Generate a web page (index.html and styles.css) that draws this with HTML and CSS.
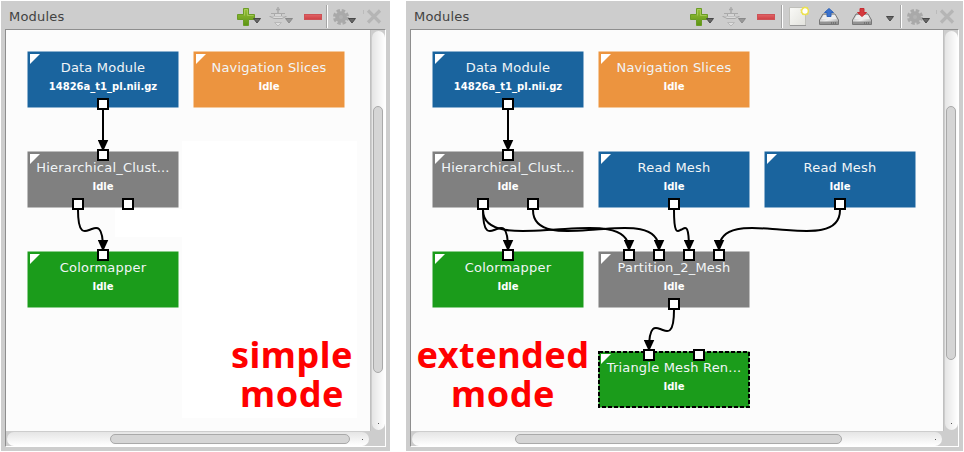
FILE: index.html
```
<!DOCTYPE html>
<html lang="en">
<head>
<meta charset="utf-8">
<title>Modules</title>
<link rel="stylesheet" href="styles.css">
</head>
<body>
<svg class="defs" width="0" height="0">
  <defs>
    <linearGradient id="green" x1="0" y1="0" x2="0" y2="1"><stop offset="0" stop-color="#9bc23c"/><stop offset="1" stop-color="#5c9413"/></linearGradient>
    <linearGradient id="red" x1="0" y1="0" x2="0" y2="1"><stop offset="0" stop-color="#e06467"/><stop offset="1" stop-color="#cf3f44"/></linearGradient>
    <linearGradient id="paper" x1="0" y1="0" x2="1" y2="1"><stop offset="0" stop-color="#fafaf7"/><stop offset="1" stop-color="#e2e2dd"/></linearGradient>
    <linearGradient id="metal" x1="0" y1="0" x2="1" y2="1"><stop offset="0" stop-color="#aaa"/><stop offset=".5" stop-color="#eee"/><stop offset="1" stop-color="#999"/></linearGradient>
    <marker id="arrow" markerUnits="userSpaceOnUse" markerWidth="12" markerHeight="12" refX="5.5" refY="9.5" orient="0"><path d="M0 0H11L5.500 12Z"/></marker>
    <symbol id="caret" viewBox="0 0 8 6"><path d="M.5.5H7.5L4 5Z" fill="#666" stroke="#484848"/></symbol>
    <symbol id="plus" viewBox="0 0 18 18"><path d="M6.5.5H11.5V6.5H17.5V11.5H11.5V17.5H6.5V11.5H.5V6.5H6.5Z" fill="url(#green)" stroke="#6a9c26"/><path d="M7.5 7.5V1.5H10.5V7.5H16.5" fill="none" stroke="#b0d264" opacity=".7"/></symbol>
    <symbol id="network" viewBox="0 0 20 20"><g fill="none" stroke="#a9a9a9"><path d="M10 1V7M8 3.500H12" stroke-width="1.500"/><path d="M1.500 10.500H6M14 10.500H18.500M3 7.500H17"/><path d="M6.500 7.500H13.500V10.500H6.500Z" fill="#d6d6d6"/><path d="M2 10.500L6 12.500H14L18 10.500" fill="#dadada"/><path d="M6.500 16.500H13.500L10 20Z" fill="#ddd" stroke="#b8b8b8"/></g></symbol>
    <symbol id="minus" viewBox="0 0 18 6"><rect x=".5" y=".5" width="17" height="5" fill="url(#red)" stroke="#cd5256"/></symbol>
    <symbol id="gear" viewBox="0 0 16 16"><circle cx="8" cy="8" r="5.800" fill="#a9a9a9"/><circle cx="8" cy="8" r="6.500" fill="none" stroke="#a9a9a9" stroke-width="3" stroke-dasharray="3.300 1.800"/><circle cx="8" cy="8" r="2" fill="#b3b3b3"/></symbol>
    <symbol id="close" viewBox="0 0 19 15"><path d="M.5 1V5" stroke="#bbb"/><path d="M5 1.500L17 13.500M17 1.500L5 13.500" stroke="#b5b5b5" stroke-width="3.200"/></symbol>
    <symbol id="new" viewBox="0 0 20 20"><path d="M.5 1.500H16.500V19.500H.5Z" fill="url(#paper)" stroke="#c0c0bb"/><path d="M1 19.500H17" stroke="#999"/><circle cx="16" cy="5" r="3.300" fill="#fff" stroke="#eee24b" stroke-width="1.300"/><circle cx="16" cy="5" r="4" fill="none" stroke="#eee24b" stroke-width="1.200" stroke-dasharray="1.500 1"/></symbol>
    <symbol id="drive" viewBox="0 0 20 17"><path d="M4 6H16L19.500 12V16.500H.5V12Z" fill="url(#metal)" stroke="#777"/><path d="M4.500 7H15.500L17.500 11H2.500Z" fill="#ececec"/><path d="M1 13.500H19V16H1Z" fill="#929292"/><path d="M12 15H18" stroke="#555" stroke-dasharray="1 1"/></symbol>
    <symbol id="up" viewBox="0 0 10 9"><path d="M3 8.500H7V4.500H9.500L5 .5.5 4.500H3Z" fill="#3a72ce" stroke="#2f63b8"/></symbol>
    <symbol id="down" viewBox="0 0 10 9"><path d="M3 .5H7V4.500H9.500L5 8.500.5 4.500H3Z" fill="#d53a3e" stroke="#c62c32"/></symbol>
  </defs>
</svg>
<main class="app">
  <section class="panel simple">
    <header class="bar">
      <h2>Modules</h2>
      <svg class="tools" width="152" height="28"><use href="#plus" x="3" y="7" width="18" height="18"/><use href="#caret" x="19" y="17" width="8" height="6"/><use href="#network" x="34" y="5" width="20" height="20"/><use class="dim" href="#caret" x="51" y="17" width="8" height="6"/><use href="#minus" x="70" y="13" width="18" height="6"/><path class="sep-dark" d="M92.500 4V27"/><path class="sep" d="M93.500 4V27"/><use href="#gear" x="99" y="8" width="16" height="16"/><use href="#caret" x="114" y="17" width="8" height="6"/><use href="#close" x="129" y="8" width="19" height="15"/></svg>
    </header>
    <div class="frame">
      <div class="canvas">
        <div class="patch large"></div><div class="patch small"></div>
        <div class="node blue c1 r1"><b>Data Module</b><small>14826a_t1_pl.nii.gz</small></div>
        <div class="node orange c2 r1"><b>Navigation Slices</b><small>Idle</small></div>
        <div class="node gray c1 r2"><b>Hierarchical_Clust...</b><small>Idle</small></div>
        <div class="node green c1 r3"><b>Colormapper</b><small>Idle</small></div>
        <svg class="wires" viewBox="0 0 364 401">
          <g class="edges"><path d="M97 80V119"/><path d="M72 180C72 207 80 201 84.500 199.500C89 198 97 192 97 219"/></g>
          <g class="ports"><rect x="92" y="69" width="10" height="10"/><rect x="92" y="120" width="10" height="10"/><rect x="67" y="169" width="10" height="10"/><rect x="117" y="169" width="10" height="10"/><rect x="92" y="220" width="10" height="10"/></g>
        </svg>
        <p class="caption">simple<br>mode</p>
      </div>
      <div class="scroll vertical"><div class="track"><i class="thumb"></i></div></div>
      <div class="scroll horizontal"><div class="track"><i class="thumb"></i></div></div>
    </div>
  </section>
  <section class="panel extended">
    <header class="bar">
      <h2>Modules</h2>
      <svg class="tools" width="272" height="28"><use href="#plus" x="3" y="7" width="18" height="18"/><use href="#caret" x="19" y="17" width="8" height="6"/><use href="#network" x="34" y="5" width="20" height="20"/><use class="dim" href="#caret" x="51" y="17" width="8" height="6"/><use href="#minus" x="70" y="13" width="18" height="6"/><path class="sep-dark" d="M94.500 4V27"/><path class="sep" d="M95.500 4V27"/><use href="#new" x="102" y="5" width="20" height="20"/><use href="#drive" x="132" y="7" width="20" height="17"/><use href="#up" x="137" y="7" width="10" height="9"/><use href="#drive" x="165" y="7" width="20" height="17"/><use href="#down" x="170" y="7" width="10" height="9"/><use href="#caret" x="199" y="15" width="8" height="6"/><path class="sep-dark" d="M213.500 4V27"/><path class="sep" d="M214.500 4V27"/><use href="#gear" x="220" y="8" width="16" height="16"/><use href="#caret" x="235" y="17" width="8" height="6"/><use href="#close" x="249" y="8" width="19" height="15"/></svg>
    </header>
    <div class="frame">
      <div class="canvas">
        <div class="node blue c1 r1"><b>Data Module</b><small>14826a_t1_pl.nii.gz</small></div>
        <div class="node orange c2 r1"><b>Navigation Slices</b><small>Idle</small></div>
        <div class="node gray c1 r2"><b>Hierarchical_Clust...</b><small>Idle</small></div>
        <div class="node blue c2 r2"><b>Read Mesh</b><small>Idle</small></div>
        <div class="node blue c3 r2"><b>Read Mesh</b><small>Idle</small></div>
        <div class="node green c1 r3"><b>Colormapper</b><small>Idle</small></div>
        <div class="node gray c2 r3"><b>Partition_2_Mesh</b><small>Idle</small></div>
        <div class="node green c2 r4"><b>Triangle Mesh Ren...</b><small>Idle</small></div>
        <svg class="wires" viewBox="0 0 532 401">
          <rect class="selection" x="188" y="322" width="150" height="55"/>
          <g class="edges"><path d="M97 80V119"/><path d="M72 180C72 207 80 201 84.500 199.500C89 198 97 192 97 219"/><path d="M72 180C72 207 117 201 145 199.500C173 198 218 192 218 219"/><path d="M122 180C122 207 161 201 185 199.500C209 198 248 192 248 219"/><path d="M263 180C263 207 267 201 270.500 199.500C274 198 278 192 278 219"/><path d="M429 180C429 207 391 201 368.500 199.500C346 198 308 192 308 219"/><path d="M263 280C263 307 255 301 250.500 299.500C246 298 238 292 238 319"/></g>
          <g class="ports"><rect x="92" y="69" width="10" height="10"/><rect x="92" y="120" width="10" height="10"/><rect x="67" y="169" width="10" height="10"/><rect x="117" y="169" width="10" height="10"/><rect x="258" y="169" width="10" height="10"/><rect x="424" y="169" width="10" height="10"/><rect x="92" y="220" width="10" height="10"/><rect x="213" y="220" width="10" height="10"/><rect x="243" y="220" width="10" height="10"/><rect x="273" y="220" width="10" height="10"/><rect x="303" y="220" width="10" height="10"/><rect x="258" y="269" width="10" height="10"/><rect x="233" y="320" width="10" height="10"/><rect x="283" y="320" width="10" height="10"/></g>
        </svg>
        <p class="caption">extended<br>mode</p>
      </div>
      <div class="scroll vertical"><div class="track"><i class="thumb"></i></div></div>
      <div class="scroll horizontal"><div class="track"><i class="thumb"></i></div></div>
    </div>
  </section>
</main>
</body>
</html>
```
FILE: styles.css
```
* { box-sizing: border-box; }
body { margin: 0; background: #fff; font-family: "DejaVu Sans", sans-serif; overflow: hidden; }
.defs { position: absolute; }
.app { display: flex; gap: 16px; padding: 1px; width: 964px; height: 452px; }
.panel { display: flex; flex-direction: column; height: 450px; padding: 0 4px; background: #cdcdcd; }
.simple { width: 389px; }
.extended { width: 557px; }
.bar { display: flex; justify-content: space-between; height: 28px; flex: none; }
.bar h2 { margin: 0 0 0 4px; font-size: 13px; letter-spacing: .2px; font-weight: 400; line-height: 32px; color: #424242; }
.tools { display: block; flex: none; }
.dim { opacity: .5; }
.sep { stroke: #fff; }
.sep-dark { stroke: #a5a5a5; }
.frame { display: grid; grid-template-columns: 1fr 15px; grid-template-rows: 401px 15px; height: 418px; border: 1px solid #8e8e8e; border-right-color: #fff; border-bottom-color: #fff; }
.canvas { position: relative; background: #fcfcfc; overflow: hidden; }
.wires { position: absolute; inset: 0; width: 100%; height: 100%; }
.node { position: absolute; width: 152px; height: 57px; padding-top: 8px; border: 1px solid; border-radius: 1px; text-align: center; color: #f1f5f7; background-clip: padding-box; }
.node::before { content: ""; position: absolute; left: 1.5px; top: 1.5px; width: 11px; height: 11px; background: #fff; clip-path: polygon(0 0, 100% 0, 0 100%); }
.node b { display: block; font-size: 13px; letter-spacing: .2px; font-weight: 400; line-height: 15px; white-space: nowrap; }
.node small { display: block; margin-top: 5px; color: #fff; font-size: 10px; line-height: 14px; font-weight: 700; }
.c1 { left: 21px; }
.c2 { left: 187px; }
.c3 { left: 353px; }
.r1 { top: 21px; }
.r2 { top: 121px; }
.r3 { top: 221px; }
.r4 { top: 321px; }
.blue { background-color: #1a649e; border-color: #8cb1cf; }
.orange { background-color: #ec943f; border-color: #f5c99c; }
.gray { background-color: #808080; border-color: #bdbdbd; }
.green { background-color: #1b9c1b; border-color: #8ccd8c; }
.edges path { fill: none; stroke: #000; stroke-width: 2; marker-end: url(#arrow); }
.ports rect { fill: #fff; stroke: #000; stroke-width: 2; }
.selection { fill: none; stroke: #000; stroke-width: 2; stroke-dasharray: 4 2; }
.caption { position: absolute; margin: 0; color: #f00; font: bold 36px/39px "Noto Sans", sans-serif; letter-spacing: .5px; text-align: center; top: 305px; }
.simple .caption { left: 216px; width: 140px; }
.extended .caption { left: 1px; width: 190px; padding-right: 8px; }
.patch { position: absolute; background: #fff; }
.large { left: 176px; top: 111px; width: 175px; height: 277px; }
.small { left: 109px; top: 179px; width: 68px; height: 28px; }
.scroll { display: flex; background: #cdcdcd; }
.vertical { padding: 1px 0 1px 1px; border-left: 1px solid #c0c0c0; }
.horizontal { padding: 1px 1px 0; }
.track { display: flex; position: relative; flex: 1; border-radius: 7px; background: linear-gradient(90deg, #e5e5e5, #fff); }
.horizontal .track { background: linear-gradient(#e5e5e5, #fff); }
.thumb { display: block; border: 1px solid #a9a9a9; border-radius: 5px; background: #d5d5d5; }
.vertical .thumb { width: 10px; height: 267px; margin: 75px 0 0 1px; }
.extended .vertical .thumb { height: 254px; }
.horizontal .thumb { width: 240px; height: 10px; margin: 2px 0 0 103px; }
.extended .horizontal .thumb { width: 327px; }
.track::after { content: ""; position: absolute; width: 1px; height: 1px; right: 6px; bottom: 6px; background: #555; }
```
